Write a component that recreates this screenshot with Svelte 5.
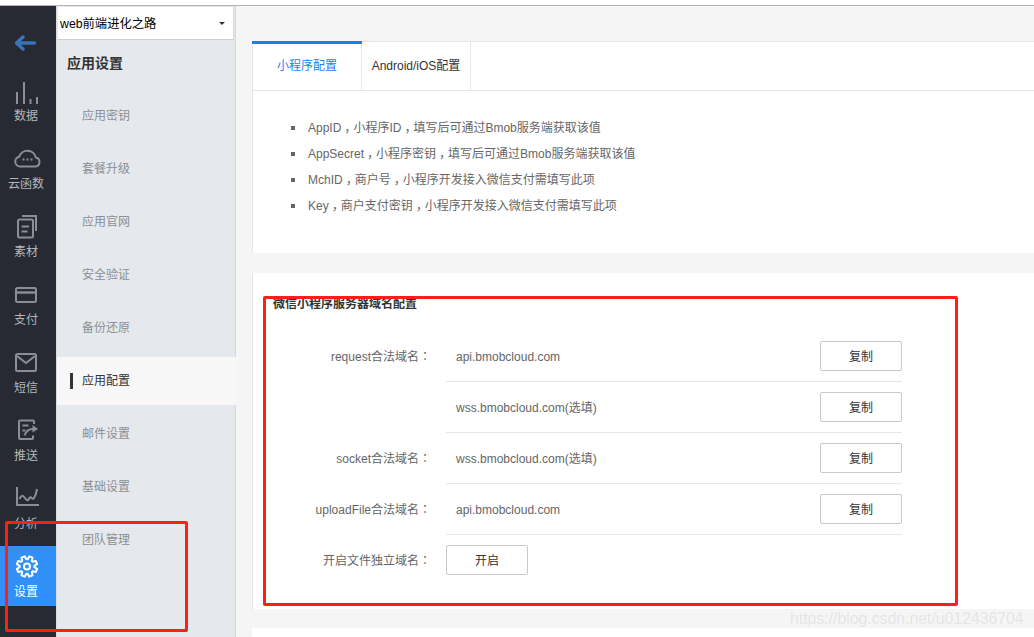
<script>
  const navItems = [
    { id: "data", label: "数据" },
    { id: "cloud", label: "云函数" },
    { id: "material", label: "素材" },
    { id: "pay", label: "支付" },
    { id: "sms", label: "短信" },
    { id: "push", label: "推送" },
    { id: "chart", label: "分析" },
    { id: "gear", label: "设置", active: true },
  ];

  const menuItems = ["应用密钥", "套餐升级", "应用官网", "安全验证", "备份还原", "应用配置", "邮件设置", "基础设置", "团队管理"];
  const activeMenu = "应用配置";

  const tips = [
    "AppID，小程序ID，填写后可通过Bmob服务端获取该值",
    "AppSecret，小程序密钥，填写后可通过Bmob服务端获取该值",
    "MchID，商户号，小程序开发接入微信支付需填写此项",
    "Key，商户支付密钥，小程序开发接入微信支付需填写此项",
  ];

  const domains = [
    { label: "request合法域名", value: "api.bmobcloud.com" },
    { label: "", value: "wss.bmobcloud.com(选填)" },
    { label: "socket合法域名", value: "wss.bmobcloud.com(选填)" },
    { label: "uploadFile合法域名", value: "api.bmobcloud.com" },
  ];

  // 8 tooth gear outline, centre 13,8.5
  function gearPath() {
    const pts = [];
    for (let i = 0; i < 8; i++) {
      const a = (i * Math.PI) / 4 + Math.PI / 8;
      const steps = [[-0.3, 7.4], [-0.17, 10.4], [0.17, 10.4], [0.3, 7.4]];
      for (const [d, r] of steps) {
        pts.push(`${(13 + r * Math.cos(a + d)).toFixed(2)} ${(8.5 + r * Math.sin(a + d)).toFixed(2)}`);
      }
    }
    return "M" + pts.join("L") + "Z";
  }
</script>

<div class="page">
  <div class="topline"></div>
  <div class="layout">
    <nav class="nav">
      <div class="back">
        <svg width="24" height="18" viewBox="0 0 24 18" fill="none" stroke="#3a74b8" stroke-width="3.4" stroke-linecap="round" stroke-linejoin="round">
          <path d="M21.5 9H4M10 3L3.5 9l6.500 6" />
        </svg>
      </div>
      {#each navItems as item}
        <div class="nav-item" class:active={item.active}>
          <svg class="nav-icon" width="28" height="24" viewBox="0 0 28 24" fill="none" stroke="currentColor" stroke-width="2">
            {#if item.id === "data"}
              <path d="M3 10v12M10 0v22M16.500 17v5M23 15v7" />
            {:else if item.id === "cloud"}
              <path d="M6 16.500H21A4.600 4.600 0 0 0 21.800 7.400A8.600 8.600 0 0 0 5.200 6.800A4.900 4.900 0 0 0 6 16.500Z" />
              <path d="M8.500 9.500h2M12.500 9.500h2M16.500 9.500h2" />
            {:else if item.id === "material"}
              <rect x="4" y="1.500" width="15" height="18" rx="1.500" />
              <path d="M8 -2H22V13M7.500 8.500h7.500M7.500 13.500h6" />
            {:else if item.id === "pay"}
              <rect x="2" y="2" width="20" height="14" rx="1.500" />
              <path d="M2 6.500H22" stroke-width="2.400" />
            {:else if item.id === "sms"}
              <rect x="2" y="0" width="20" height="17" rx="1.500" />
              <path d="M3 2l9 7 9-7" />
            {:else if item.id === "push"}
              <path d="M20 2V-.5A1 1 0 0 0 19-1.500H6A1 1 0 0 0 5-.5V16A1 1 0 0 0 6 17H18A1 1 0 0 0 19 16V13.500" />
              <path d="M8.500 3.500h6M8.500 8.500h3" />
              <path d="M10.500 13.500C12 9 15 7 19 7" />
              <path d="M18.500 3l5.500 4-5.500 3.500z" fill="currentColor" stroke="none" />
            {:else if item.id === "chart"}
              <path d="M3-3V15H25" />
              <path d="M5.500 9C7 5 9 5 11 8S14 11 15.500 8S18 11 20 8S22.500 2 23-1" />
            {:else}
              <path d={gearPath()} stroke-linejoin="round" />
              <circle cx="13" cy="8.500" r="3" />
            {/if}
          </svg>
          <span class="nav-label">{item.label}</span>
        </div>
      {/each}
    </nav>

    <aside class="side">
      <div class="app-select">
        <span>web前端进化之路</span>
        <i class="caret"></i>
      </div>
      <div class="side-title">应用设置</div>
      <ul class="menu">
        {#each menuItems as name}
          <li class:current={name === activeMenu}>{name}</li>
        {/each}
      </ul>
    </aside>

    <main class="main">
      <div class="tabs">
        <div class="tab on">小程序配置</div>
        <div class="tab">Android/iOS配置</div>
      </div>

      <div class="block tips">
        <ul>
          {#each tips as tip}
            <li>
              {#each tip.split("，") as part, i}{#if i > 0}<span class="comma">，</span>{/if}{part}{/each}
            </li>
          {/each}
        </ul>
      </div>

      <section class="block domain">
        <h3>微信小程序服务器域名配置</h3>
        {#each domains as row}
          <div class="row">
            <div class="label">{row.label}{#if row.label}<span class="colon">：</span>{/if}</div>
            <div class="cell">
              <span class="value">{row.value}</span>
              <button type="button">复制</button>
            </div>
          </div>
        {/each}
        <div class="row">
          <div class="label">开启文件独立域名<span class="colon">：</span></div>
          <div class="cell plain">
            <button type="button">开启</button>
          </div>
        </div>
      </section>

      <div class="block rest"></div>
    </main>
  </div>

  <div class="mark mark-a"></div>
  <div class="mark mark-b"></div>
  <div class="watermark">https://blog.csdn.net/u012436704</div>
</div>

<style>
  :global(body) {
    margin: 0;
    background: #fff;
  }

  .page {
    position: relative;
    width: 1034px;
    height: 637px;
    overflow: hidden;
    padding-top: 5px;
    box-sizing: border-box;
    display: flex;
    flex-direction: column;
    font-family: "Liberation Sans", "Noto Sans CJK SC", sans-serif;
    font-size: 12px;
    color: #333;
  }

  .topline {
    height: 1px;
    background: #b4b4b4;
    flex: none;
  }

  .layout {
    flex: 1;
    display: flex;
    min-height: 0;
  }

  /* dark icon rail */
  .nav {
    width: 56px;
    flex: none;
    background: #272a33;
  }

  .back {
    height: 64px;
    display: flex;
    align-items: center;
    justify-content: center;
    padding: 10px 6px 0 0;
    box-sizing: border-box;
  }

  .nav-item {
    height: 60px;
    margin-bottom: 8px;
    padding-top: 12px;
    box-sizing: border-box;
    display: flex;
    flex-direction: column;
    align-items: center;
    color: #8b8e94;
  }

  .nav-item.active {
    background: #3190f7;
    color: #fff;
  }

  .nav-icon {
    display: block;
    overflow: visible;
    flex: none;
  }

  .nav-label {
    margin-top: 2px;
    padding-right: 4px;
    line-height: 16px;
    color: #b4b7bb;
  }

  .nav-item.active .nav-label {
    color: #fff;
  }

  /* settings menu */
  .side {
    width: 180px;
    flex: none;
    background: #e5e8ed;
    border-left: 1px solid #dcdcdc;
    border-right: 1px solid #d6d6d6;
    box-sizing: border-box;
  }

  .app-select {
    height: 33px;
    margin: 1px 1px 0 1px;
    padding: 0 8px 0 2px;
    background: #fff;
    border-right: 1px solid #d8d8d8;
    border-bottom: 1px solid #cfcfcf;
    box-sizing: border-box;
    display: flex;
    align-items: center;
    justify-content: space-between;
    font-size: 12.3px;
    color: #000;
  }

  .caret {
    width: 0;
    height: 0;
    border-left: 3px solid transparent;
    border-right: 3px solid transparent;
    border-top: 3px solid #333;
  }

  .side-title {
    padding-left: 10px;
    margin-top: 15px;
    line-height: 16px;
    font-size: 14px;
    font-weight: bold;
    color: #333;
  }

  .menu {
    list-style: none;
    margin: 21px -1px 0 0;
    padding: 0;
  }

  .menu li {
    position: relative;
    height: 48px;
    margin-bottom: 5px;
    padding-left: 25px;
    line-height: 48px;
    color: #8c8f94;
  }

  .menu li.current {
    background: #f7f7f7;
    color: #333;
  }

  .menu li.current::before {
    content: "";
    position: absolute;
    left: 13px;
    top: 16px;
    width: 3px;
    height: 16px;
    background: #333;
  }

  /* content */
  .main {
    flex: 1;
    min-width: 0;
    background: #f5f5f5;
    padding: 35px 0 0 16px;
    display: flex;
    flex-direction: column;
  }

  .tabs {
    display: flex;
    height: 50px;
    flex: none;
    background: #fff;
    border: 1px solid #e6e6e6;
    border-right: none;
    box-sizing: border-box;
  }

  .tab {
    width: 109px;
    box-sizing: border-box;
    border-right: 1px solid #e6e6e6;
    text-align: center;
    line-height: 48px;
    color: #333;
  }

  .tab.on {
    position: relative;
    color: #1f80f0;
  }

  .tab.on::before {
    content: "";
    position: absolute;
    left: -1px;
    right: -1px;
    top: -1px;
    height: 3px;
    background: #1a7ef2;
  }

  .block {
    background: #fff;
    border-left: 1px solid #e6e6e6;
    flex: none;
  }

  .tips {
    height: 162px;
    box-sizing: border-box;
    padding-top: 24px;
  }

  .tips ul {
    margin: 0;
    padding: 0 0 0 55px;
    list-style: none;
    color: #666;
  }

  .tips li {
    position: relative;
    line-height: 26px;
  }

  .tips li::before {
    content: "";
    position: absolute;
    left: -17px;
    top: 11px;
    width: 4px;
    height: 4px;
    background: #666;
  }

  /* this face centres the comma in its cell, like the reference */
  .comma {
    font-family: "Noto Sans CJK TC", sans-serif;
    line-height: 1;
    vertical-align: -4px;
  }

  .domain {
    margin-top: 20px;
    padding: 23px 0 24px 20px;
  }

  .domain h3 {
    margin: 0 0 19px;
    font-size: 12px;
    line-height: 16px;
    font-weight: bold;
    color: #333;
  }

  .row {
    display: flex;
  }

  .label {
    width: 158px;
    margin-right: 15px;
    padding-top: 16px;
    line-height: 17px;
    text-align: right;
    color: #666;
    flex: none;
  }

  .colon {
    font-family: "Noto Sans CJK TC", sans-serif;
  }

  .cell {
    width: 456px;
    height: 51px;
    flex: none;
    padding: 10px 0;
    box-sizing: border-box;
    border-bottom: 1px solid #e6e6e6;
    display: flex;
    align-items: center;
    justify-content: space-between;
  }

  .cell.plain {
    border-bottom: none;
    height: 50px;
  }

  .value {
    padding: 2px 0 0 10px;
    line-height: 17px;
    color: #666;
  }

  button {
    width: 82px;
    height: 30px;
    padding: 1px 0 0;
    background: #fff;
    border: 1px solid #c8c8c8;
    border-radius: 2px;
    font: inherit;
    line-height: 16px;
    color: #333;
  }

  .rest {
    margin-top: 19px;
    flex: 1;
    border-left: none;
  }

  /* hand drawn annotations on top of the screenshot */
  .mark {
    position: absolute;
    border: 3px solid #ff1f14;
    border-radius: 2px;
    box-sizing: border-box;
    pointer-events: none;
  }

  .mark-a {
    left: 5px;
    top: 521px;
    width: 183px;
    height: 111px;
  }

  .mark-b {
    left: 263px;
    top: 296px;
    width: 695px;
    height: 310px;
  }

  .watermark {
    position: absolute;
    left: 790px;
    top: 609px;
    line-height: 19px;
    font-size: 15.8px;
    color: #e4e4e4;
    text-shadow: 0 0 1px #fff;
    white-space: nowrap;
  }
</style>
